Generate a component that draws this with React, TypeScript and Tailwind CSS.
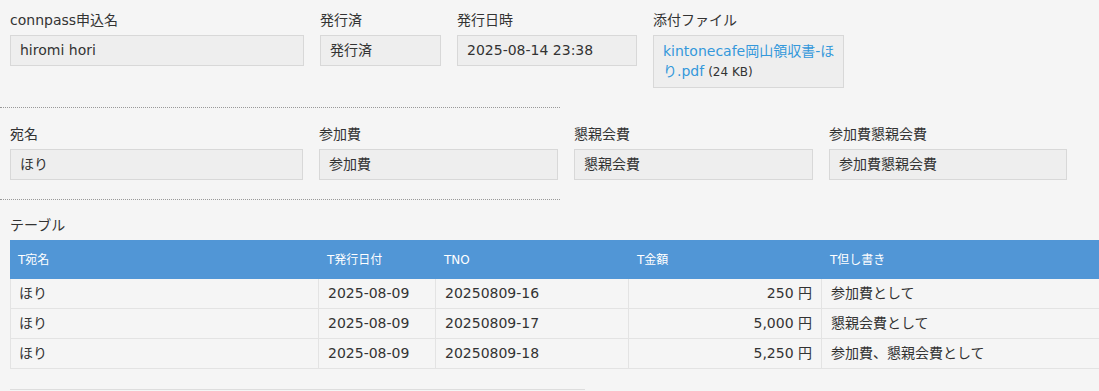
import React from 'react';

type Field = { label: string; value: string; width: string };

const row1: Field[] = [
  { label: 'connpass申込名', value: 'hiromi hori', width: 'w-[294px]' },
  { label: '発行済', value: '発行済', width: 'w-[121px]' },
  { label: '発行日時', value: '2025-08-14 23:38', width: 'w-[180px]' },
];

const row2: Field[] = [
  { label: '宛名', value: 'ほり', width: 'w-[293px]' },
  { label: '参加費', value: '参加費', width: 'w-[239px]' },
  { label: '懇親会費', value: '懇親会費', width: 'w-[239px]' },
  { label: '参加費懇親会費', value: '参加費懇親会費', width: 'w-[238px]' },
];

const rows = [
  { name: 'ほり', date: '2025-08-09', no: '20250809-16', amount: '250 円', note: '参加費として' },
  { name: 'ほり', date: '2025-08-09', no: '20250809-17', amount: '5,000 円', note: '懇親会費として' },
  { name: 'ほり', date: '2025-08-09', no: '20250809-18', amount: '5,250 円', note: '参加費、懇親会費として' },
];

function FieldBox({ label, value, width }: Field) {
  return (
    <div className={width}>
      <div className="h-[20px] leading-[20px] mb-[5px] whitespace-nowrap">{label}</div>
      <div className="h-[31px] flex items-center px-[9px] bg-[#eeeeee] border border-[#d8d8d8] whitespace-nowrap">
        {value}
      </div>
    </div>
  );
}

export default function App() {
  return (
    <div className="min-h-screen w-full overflow-hidden bg-[#f5f5f5] text-[#333] text-[14px] font-['DejaVu_Sans','Noto_Sans_CJK_JP',sans-serif]">
      {/* Row 1 */}
      <div className="flex items-start gap-[16px] pl-[10px] pt-[10px] pb-[19px]">
        {row1.map((f) => (
          <FieldBox key={f.label} {...f} />
        ))}
        <div className="w-[191px]">
          <div className="h-[20px] leading-[20px] mb-[5px]">添付ファイル</div>
          <div className="bg-[#eeeeee] border border-[#d8d8d8] pl-[9px] py-[5px] leading-[20px] whitespace-nowrap overflow-hidden">
            <div className="text-[#3498db]">kintonecafe岡山領収書-ほ</div>
            <div>
              <span className="text-[#3498db]">り.pdf</span>
              <span className="text-[12px] ml-[4px]">(24 KB)</span>
            </div>
          </div>
        </div>
      </div>
      <div className="w-[560px] border-t border-dotted border-[#999]" />

      {/* Row 2 */}
      <div className="flex items-start gap-[16px] pl-[10px] pt-[16px] pb-[19px]">
        {row2.map((f) => (
          <FieldBox key={f.label} {...f} />
        ))}
      </div>
      <div className="w-[560px] border-t border-dotted border-[#999]" />

      {/* Table */}
      <div className="pl-[10px] pt-[15px]">
        <div className="h-[20px] leading-[20px] mb-[5px]">テーブル</div>
        <div className="w-[1400px]">
          <div className="flex h-[39px] bg-[#5196d6] text-white text-[12px]">
            <div className="w-[308px] pl-[8px] flex items-center">T宛名</div>
            <div className="w-[117px] pl-[9px] flex items-center">T発行日付</div>
            <div className="w-[193px] pl-[9px] flex items-center">TNO</div>
            <div className="w-[193px] pl-[9px] flex items-center">T金額</div>
            <div className="flex-1 pl-[9px] flex items-center">T但し書き</div>
          </div>
          {rows.map((r) => (
            <div key={r.no} className="flex h-[30px] border-b border-[#e3e3e3]">
              <div className="w-[308px] pl-[8px] flex items-center border-l border-[#e3e3e3]">{r.name}</div>
              <div className="w-[117px] pl-[9px] flex items-center border-l border-[#e3e3e3]">{r.date}</div>
              <div className="w-[193px] pl-[9px] flex items-center border-l border-[#e3e3e3]">{r.no}</div>
              <div className="w-[193px] pr-[9px] flex items-center justify-end border-l border-[#e3e3e3]">{r.amount}</div>
              <div className="flex-1 pl-[9px] flex items-center border-l border-[#e3e3e3]">{r.note}</div>
            </div>
          ))}
        </div>
        <div className="mt-[20px] w-[575px] h-px bg-[#dddddd]" />
      </div>
    </div>
  );
}
